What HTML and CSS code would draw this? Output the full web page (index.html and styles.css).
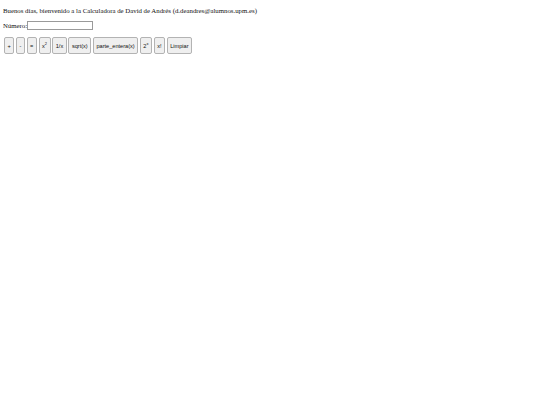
FILE: index.html
```html
<!DOCTYPE html>
<html lang="es">
<head>
<meta charset="utf-8">
<title>Calculadora</title>
<link rel="stylesheet" href="styles.css">
</head>
<body>
<p class="saludo">Buenos días, bienvenido a la Calculadora de David de Andrés (d.deandres@alumnos.upm.es)</p>
<div class="fila-numero"><label for="numero">Número:</label><input id="numero" class="campo" type="text"></div>
<div class="botones">
<button class="btn">+</button>
<button class="btn">-</button>
<button class="btn">=</button>
<button class="btn">x<sup>2</sup></button>
<button class="btn">1/x</button>
<button class="btn">sqrt(x)</button>
<button class="btn">parte_entera(x)</button>
<button class="btn">2<sup>x</sup></button>
<button class="btn">x!</button>
<button class="btn">Limpiar</button>
</div>
</body>
</html>
```
FILE: styles.css
```css
html { background: #fff; }
body {
  margin: 3px 3px 3px 3px;
  font-family: "Liberation Serif", "Times New Roman", serif;
  font-size: 6.8px;
  color: #111;
}
.saludo {
  margin: 3px 0 0 0;
  line-height: 9px;
}
.fila-numero {
  margin-top: 5px;
  display: flex;
  align-items: center;
  height: 10px;
}
.campo {
  width: 64px;
  height: 7px;
  margin: 0;
  padding: 0;
  border: 1px solid #9a9a9a;
  font-size: 6px;
  box-sizing: content-box;
}
.botones {
  margin-top: 7px;
  margin-left: 1px;
  display: flex;
  gap: 1.7px;
}
.btn {
  height: 17px;
  margin: 0;
  padding: 0 2.5px;
  font-family: "Liberation Sans", Arial, sans-serif;
  font-size: 5.6px;
  color: #111;
  background: #efefef;
  border: 1px solid #b3b3b3;
  border-radius: 2px;
}
.btn sup {
  font-size: 4px;
  line-height: 0;
}
```
